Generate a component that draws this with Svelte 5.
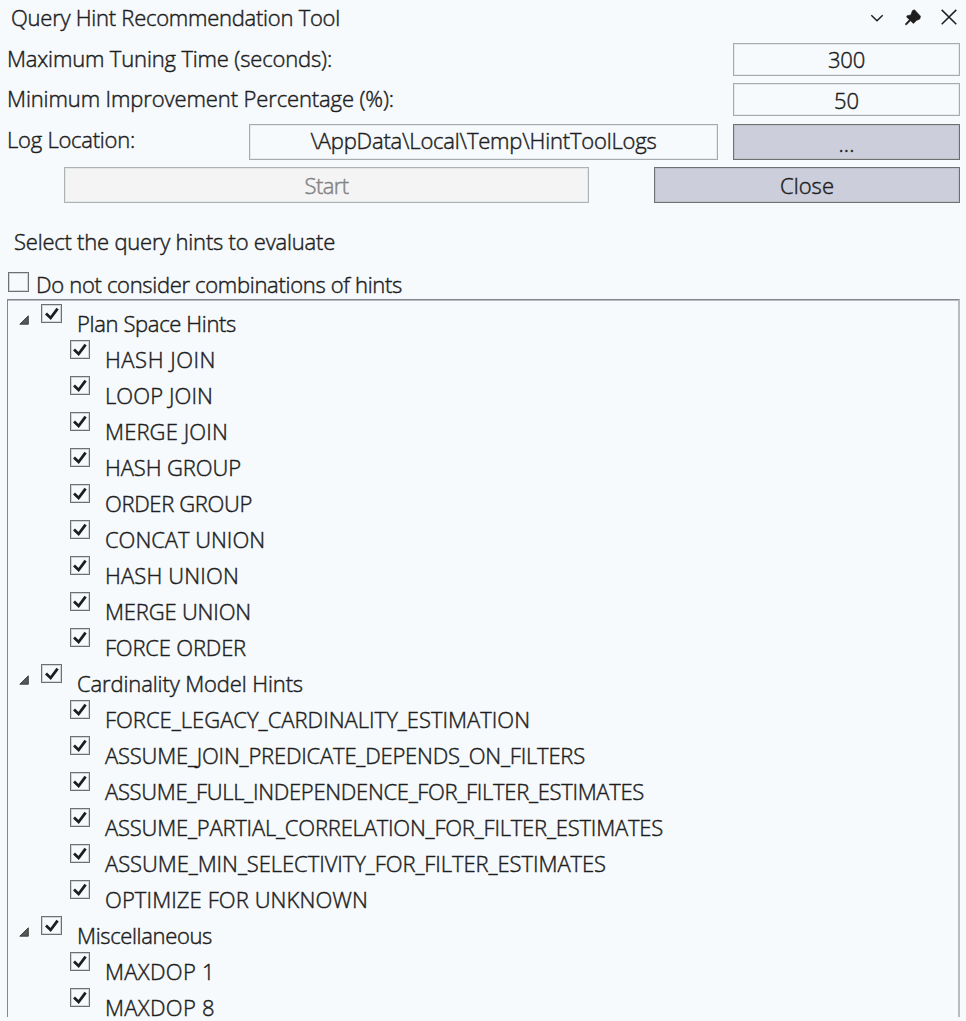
<script>
  const groups = [
    {
      name: 'Plan Space Hints', w: 158,
      hints: [
        ['HASH JOIN', 110], ['LOOP JOIN', 107], ['MERGE JOIN', 122], ['HASH GROUP', 135],
        ['ORDER GROUP', 146], ['CONCAT UNION', 159], ['HASH UNION', 133], ['MERGE UNION', 145], ['FORCE ORDER', 140]
      ]
    },
    {
      name: 'Cardinality Model Hints', w: 225,
      hints: [
        ['FORCE_LEGACY_CARDINALITY_ESTIMATION', 424], ['ASSUME_JOIN_PREDICATE_DEPENDS_ON_FILTERS', 479],
        ['ASSUME_FULL_INDEPENDENCE_FOR_FILTER_ESTIMATES', 538], ['ASSUME_PARTIAL_CORRELATION_FOR_FILTER_ESTIMATES', 557],
        ['ASSUME_MIN_SELECTIVITY_FOR_FILTER_ESTIMATES', 500], ['OPTIMIZE FOR UNKNOWN', 262]
      ]
    },
    { name: 'Miscellaneous', w: 134, hints: [['MAXDOP 1', 109], ['MAXDOP 8', 109]] }
  ];

  function fit(node, width) {
    const natural = node.getBoundingClientRect().width;
    node.style.letterSpacing = (width + 1 - natural) / node.textContent.length + 'px';
  }
</script>

{#snippet box(checked, child)}
  <span class="check" class:child>
    {#if checked}
      <svg viewBox="0 0 18 17"><path d="M3 8.6 7.6 13 14.6 3.6" /></svg>
    {/if}
  </span>
{/snippet}

<main>
  <header>
    <h1><span use:fit={328}>Query Hint Recommendation Tool</span></h1>
    <svg class="tools" viewBox="0 0 96 26">
      <path class="line" d="M1.3 10.2 7 15.7 12.7 10.2" />
      <path class="pin" d="M44.5 4.8 50.5 11.2 49.8 14 46.3 15.6 43.8 18.3 42.8 18 40.5 15.8 36.6 19.8 35.5 19.8 35.5 18.7 39.3 14.7 36.7 12 37 10.8 40.8 10 42.5 5.6Z" />
      <path class="line" d="M71.7 4.9 86.3 19.3M86.3 4.9 71.7 19.3" />
    </svg>
  </header>

  <div class="row first">
    <label for="time"><span use:fit={324}>Maximum Tuning Time (seconds):</span></label>
    <div class="field" id="time"><span use:fit={36}>300</span></div>
  </div>
  <div class="row second">
    <label for="pct"><span use:fit={386}>Minimum Improvement Percentage (%):</span></label>
    <div class="field low" id="pct"><span use:fit={24}>50</span></div>
  </div>
  <div class="row third">
    <label for="log"><span use:fit={127}>Log Location:</span></label>
    <div class="field path" id="log"><span use:fit={345}>\AppData\Local\Temp\HintToolLogs</span></div>
    <button class="browse"><span use:fit={15}>...</span></button>
  </div>
  <div class="actions">
    <button class="start" disabled><span use:fit={43}>Start</span></button>
    <button class="close"><span use:fit={53}>Close</span></button>
  </div>

  <p class="select"><span use:fit={320}>Select the query hints to evaluate</span></p>
  <div class="combo">
    {@render box(false, false)}
    <span class="combo-label"><span use:fit={365}>Do not consider combinations of hints</span></span>
  </div>

  <section class="tree">
    {#each groups as group}
      <div class="node">
        <svg class="arrow" viewBox="0 0 10 10"><path d="M9.3.8V9.2H.8Z" /></svg>
        {@render box(true, false)}
        <span class="name"><span use:fit={group.w}>{group.name}</span></span>
      </div>
      {#each group.hints as [hint, w]}
        <div class="node leaf">
          {@render box(true, true)}
          <span class="name"><span use:fit={w}>{hint}</span></span>
        </div>
      {/each}
    {/each}
  </section>
</main>

<style>
  :global(body) { background: #f6fafd; overflow: hidden; }
  main {
    box-sizing: border-box;
    width: 966px;
    height: 1021px;
    overflow: hidden;
    display: flex;
    flex-direction: column;
    background: #f6fafd;
    color: #1e1e1e;
    font: 300 22px "Open Sans", "Noto Sans", sans-serif;
    -webkit-text-stroke: .45px currentColor;
    white-space: nowrap;
  }
  header { height: 43px; display: flex; justify-content: space-between; padding: 0 8px 0 11px; flex: none; }
  h1 { margin: 0; font: inherit; line-height: 35px; }
  .tools { width: 96px; height: 26px; margin-top: 5px; margin-right: -8px; }
  .line { fill: none; stroke: #1e1e1e; stroke-width: 1.5; }
  .pin { fill: #1e1e1e; stroke: #1e1e1e; stroke-width: .6; }
  .row { display: flex; justify-content: space-between; padding: 0 6px 0 7px; flex: none; }
  .first, .second { height: 40px; }
  .third { height: 43px; padding-top: 1px; box-sizing: border-box; }
  label { line-height: 30px; }
  .third label { width: 242px; }
  .field, button {
    box-sizing: border-box;
    width: 227px;
    height: 33px;
    border: 1px solid #a7abad;
    box-shadow: inset 0 0 0 1px #e6eaec;
    text-align: center;
    line-height: 30px;
  }
  .low { line-height: 32px; }
  .path { width: 469px; height: 36px; line-height: 31px; margin-right: 15px; }
  button { height: 36px; padding: 0; font: inherit; color: inherit; background: #cccedb; border-color: #707070; box-shadow: inset 0 0 0 1px #bfc1cd; line-height: 36px; }
  .row.third { justify-content: flex-start; }
  .third button { line-height: 37px; padding-bottom: 2px; }
  .actions { display: flex; justify-content: space-between; padding: 0 6px 0 64px; height: 60px; margin-top: 1px; flex: none; }
  .actions button { line-height: 34px; }
  .actions .start { width: 525px; background: #f4f4f4; color: #838383; border-color: #adb2b5; box-shadow: inset 0 0 0 1px #e4e6e7; }
  .actions .close { width: 306px; }
  .select { margin: 0; padding-left: 14px; line-height: 28px; height: 45px; flex: none; }
  .combo { display: flex; padding-left: 8px; height: 27px; flex: none; }
  .combo-label { padding-left: 7px; line-height: 24px; }
  .check {
    box-sizing: border-box;
    width: 21px;
    height: 19px;
    border: 1px solid #707070;
    box-shadow: inset 0 0 0 1px #d2d4d6;
    flex: none;
  }
  .combo .check { height: 20px; }
  .check.child { width: 20px; }
  .check svg { display: block; width: 18px; height: 17px; margin: 0 auto; }
  .check path { fill: none; stroke: #1e1e1e; stroke-width: 2.8; }
  .tree {
    box-sizing: border-box;
    width: 953px;
    height: 718px;
    margin-left: 7px;
    padding-top: 4px;
    border: solid #828790;
    border-width: 1px 2px 0 1px;
    border-right-color: #b8bcc0;
    box-shadow: inset 0 1px #b7bbbe;
    flex: none;
  }
  .node { display: flex; height: 36px; padding-left: 11px; }
  .leaf { padding-left: 62px; }
  .arrow { width: 10px; height: 10px; margin: 11px 12px 0 0; }
  .arrow path { fill: #595959; stroke: #262626; stroke-width: .8; }
  .name { padding-left: 15px; line-height: 39px; }
</style>
